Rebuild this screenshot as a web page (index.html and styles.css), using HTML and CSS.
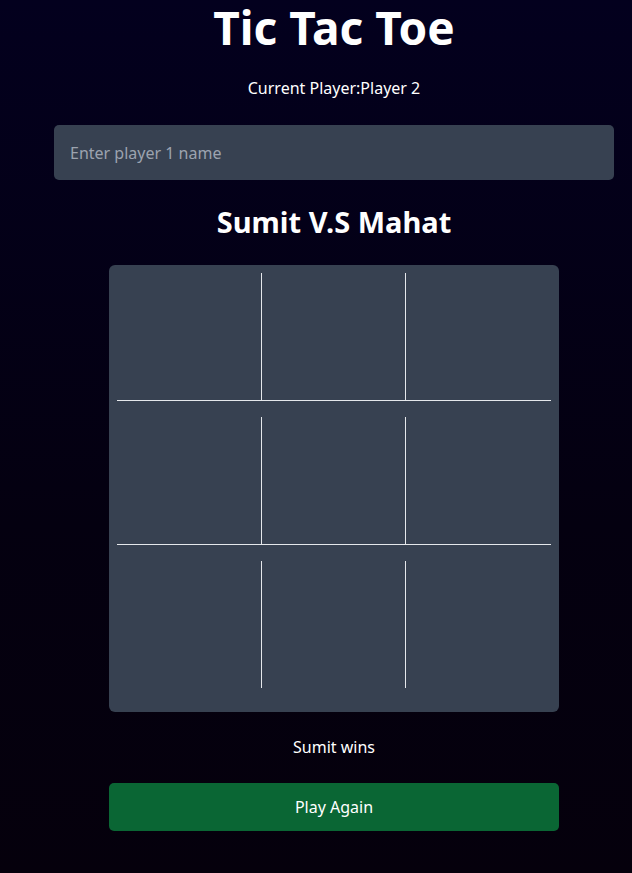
FILE: index.html
```html
<!DOCTYPE html>
<html lang="en">
<head>
    <meta charset="UTF-8">
    <meta name="viewport" content="width=device-width, initial-scale=1.0">
    <title>Tic Tac Toe</title>
    <link rel="stylesheet" href="styles.css">
</head>
<body>
    <div class="game">
        <h1>Tic Tac Toe</h1>
        <p class="turn">Current Player:Player 2</p>

        <input type="text" class="name-input" placeholder="Enter player 1 name">

        <h2 class="versus">Sumit V.S Mahat</h2>

        <div class="board">
            <div class="cell"></div>
            <div class="cell"></div>
            <div class="cell"></div>
            <div class="cell"></div>
            <div class="cell"></div>
            <div class="cell"></div>
            <div class="cell"></div>
            <div class="cell"></div>
            <div class="cell"></div>
        </div>

        <p class="result">Sumit wins</p>
        <button class="play-again">Play Again</button>
    </div>
</body>
</html>
```

FILE: styles.css
```css
/* General Styles */
body {
    margin: 0;
    min-height: 100vh;
    font-family: "Noto Sans", Lato, sans-serif;
    color: white;
    background: linear-gradient(#03001e, #040010 60%, #05000c);
}

/* Game Container */
.game {
    width: 560px;
    margin-left: 54px;
    text-align: center;
}

h1 {
    margin: 0;
    font-size: 46px;
    line-height: 54px;
    font-weight: 700;
}

.turn {
    margin: 24px 0 0;
    font-size: 16px;
    line-height: 20px;
}

/* Name Input */
.name-input {
    display: block;
    box-sizing: border-box;
    width: 100%;
    height: 55px;
    margin-top: 27px;
    padding: 0 16px;
    border: none;
    border-radius: 5px;
    background: #374151;
    color: white;
    font-family: inherit;
    font-size: 16px;
    outline: none;
}

.name-input::placeholder {
    color: #9ca3af;
}

.versus {
    margin: 24px 0 0;
    font-size: 29px;
    line-height: 36px;
    font-weight: 700;
}

/* Board */
.board {
    width: 450px;
    box-sizing: border-box;
    margin: 25px auto 0;
    padding: 8px 8px 24px;
    background: #374151;
    border-radius: 6px;
    display: grid;
    grid-template-columns: repeat(3, 1fr);
    row-gap: 15px;
}

.cell {
    height: 127px;
}

.cell:nth-child(-n+6) {
    border-bottom: 1px solid #e5e7eb;
}

.cell:not(:nth-child(3n)) {
    border-right: 1px solid #e5e7eb;
}

.cell:nth-child(n+4) {
    margin-top: 1px;
}

.result {
    margin: 25px 0 0;
    font-size: 16px;
    line-height: 20px;
}

/* Buttons */
.play-again {
    display: block;
    width: 450px;
    height: 48px;
    margin: 26px auto 0;
    border: none;
    border-radius: 5px;
    background: #0a6634;
    color: white;
    font-family: inherit;
    font-size: 16px;
    cursor: pointer;
}
```
